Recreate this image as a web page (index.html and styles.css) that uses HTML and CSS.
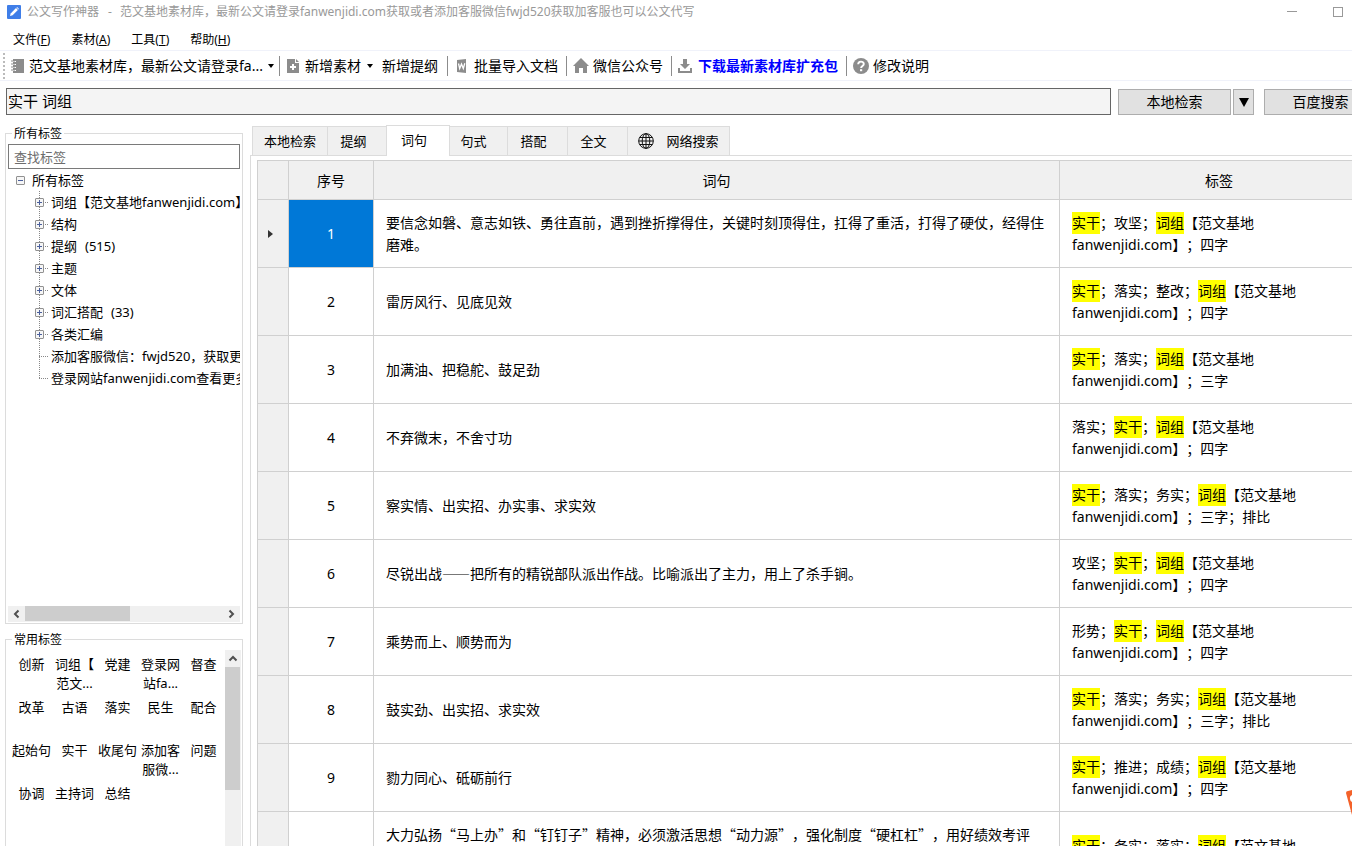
FILE: index.html
```html
<!DOCTYPE html>
<html lang="zh-CN">
<head>
<meta charset="utf-8">
<title>公文写作神器</title>
<link rel="stylesheet" href="styles.css">
</head>
<body>
<div class="app">
  <header class="titlebar">
    <svg class="logo" width="14" height="14" viewBox="0 0 14 14"><rect width="14" height="14" rx="1" fill="#3f7ee8"/><path d="M3 11l.7-2.6L9 3.1l1.9 1.9-5.3 5.3z" fill="#fff"/><path d="M9.5 2.6l.6-.6 1.9 1.9-.6.6z" fill="#fff"/></svg>
    <h1 class="title">公文写作神器<span class="dash">-</span>范文基地素材库，最新公文请登录fanwenjidi.com获取或者添加客服微信fwjd520获取加客服也可以公文代写</h1>
    <div class="controls">
      <button class="control" aria-label="最小化"><svg width="10" height="10"><path d="M0 4.500h10" stroke="#999"/></svg></button>
      <button class="control" aria-label="最大化"><svg width="10" height="10"><rect x=".5" y=".5" width="9" height="9" fill="none" stroke="#999"/></svg></button>
    </div>
  </header>

  <nav class="menu">
    <button>文件(<u>F</u>)</button>
    <button>素材(<u>A</u>)</button>
    <button>工具(<u>T</u>)</button>
    <button>帮助(<u>H</u>)</button>
  </nav>

  <div class="toolbar">
    <span class="grip"></span>
    <button class="tool tool-library"><svg width="14" height="16" viewBox="0 0 14 16"><path d="M3 1h11v14H3v-2h3v-1H3v-2h3V9H3V7h3V6H3V4h3V3H3z" fill="#8c8c8c"/><path d="M1 3h4M1 6h4M1 9h4M1 12h4" stroke="#8c8c8c"/></svg>范文基地素材库，最新公文请登录fa...<i class="caret"></i></button>
    <span class="sep"></span>
    <button class="tool tool-new"><svg width="12" height="16" viewBox="0 0 12 16"><path d="M0 1h8v4h4v10H0z" fill="#8c8c8c"/><path d="M9 1l3 3H9z" fill="#8c8c8c"/><path d="M6 6v6M3 9h6" stroke="#fff" stroke-width="2"/></svg>新增素材<i class="caret"></i></button>
    <button class="tool tool-plain">新增提纲</button>
    <span class="sep"></span>
    <button class="tool"><svg width="12" height="16" viewBox="0 0 12 16"><path d="M1 2l9-1v14l-9-1z" fill="#8c8c8c"/><path d="M2.500 5.500l1.200 5L5.500 6l1.800 4.500L8.800 5.300" fill="none" stroke="#fff" stroke-width="1.300"/></svg>批量导入文档</button>
    <span class="sep"></span>
    <button class="tool tool-tight"><svg width="16" height="16" viewBox="0 0 16 16"><path d="M8 0l8 8h-2v7h-4v-5H6v5H2V8H0z" fill="#8c8c8c"/></svg>微信公众号</button>
    <span class="sep"></span>
    <button class="tool tool-link"><svg width="14" height="16" viewBox="0 0 14 16"><path d="M5 1h4v5h3l-5 5-5-5h3zM0 10h2v3h10v-3h2v5H0z" fill="#8c8c8c"/></svg>下载最新素材库扩充包</button>
    <span class="sep"></span>
    <button class="tool tool-tight"><svg width="16" height="16" viewBox="0 0 16 16"><circle cx="8" cy="8" r="8" fill="#8c8c8c"/><path d="M5.200 6.200C5.200 2.800 10.800 2.800 10.800 6c0 1.900-2.700 2-2.700 4" fill="none" stroke="#fff" stroke-width="1.900"/><rect x="7" y="11.200" width="2.200" height="2" fill="#fff"/></svg>修改说明</button>
  </div>

  <form class="search">
    <input class="query" type="text" value="实干 词组" aria-label="检索词">
    <button class="btn btn-local" type="button">本地检索</button>
    <button class="btn btn-drop" type="button" aria-label="更多检索"><svg width="10" height="10"><path d="M0 1h10L5 10z"/></svg></button>
    <button class="btn btn-baidu" type="button">百度搜索</button>
  </form>

  <div class="body">
    <aside class="side">
      <fieldset class="group group-tree">
        <legend>所有标签</legend>
        <input class="find" type="text" placeholder="查找标签" aria-label="查找标签">
        <div class="tree">
          <div class="root"><button class="knob minus" aria-label="折叠"></button>所有标签</div>
          <ul>
            <li><button class="knob" aria-label="展开"></button>词组【范文基地fanwenjidi.com】</li>
            <li><button class="knob" aria-label="展开"></button>结构</li>
            <li><button class="knob" aria-label="展开"></button>提纲<span class="count">(515)</span></li>
            <li><button class="knob" aria-label="展开"></button>主题</li>
            <li><button class="knob" aria-label="展开"></button>文体</li>
            <li><button class="knob" aria-label="展开"></button>词汇搭配<span class="count">(33)</span></li>
            <li><button class="knob" aria-label="展开"></button>各类汇编</li>
            <li class="leaf">添加客服微信：fwjd520，获取更多</li>
            <li class="leaf">登录网站fanwenjidi.com查看更多</li>
          </ul>
        </div>
        <div class="hbar" aria-hidden="true">
          <svg width="17" height="16"><path d="M10.500 4.500L7 8l3.500 3.500" fill="none" stroke="#505050" stroke-width="2"/></svg>
          <div class="track"><div class="thumb"></div></div>
          <svg width="17" height="16"><path d="M6.500 4.500L10 8l-3.500 3.500" fill="none" stroke="#505050" stroke-width="2"/></svg>
        </div>
      </fieldset>
      <fieldset class="group group-common">
        <legend>常用标签</legend>
        <div class="common">
          <div class="chips">
            <button>创新</button><button>词组【<br>范文...</button><button>党建</button><button>登录网<br>站fa...</button><button>督查</button>
            <button>改革</button><button>古语</button><button>落实</button><button>民生</button><button>配合</button>
            <button>起始句</button><button>实干</button><button>收尾句</button><button>添加客<br>服微...</button><button>问题</button>
            <button>协调</button><button>主持词</button><button>总结</button>
          </div>
          <div class="vbar" aria-hidden="true">
            <svg width="16" height="17"><path d="M4.500 10.500L8 7l3.500 3.500" fill="none" stroke="#505050" stroke-width="2"/></svg>
            <div class="thumb"></div>
          </div>
        </div>
      </fieldset>
    </aside>

    <main class="main">
      <div class="tabs" role="tablist">
        <button role="tab" class="tab first">本地检索</button>
        <button role="tab" class="tab">提纲</button>
        <button role="tab" class="tab active" aria-selected="true">词句</button>
        <button role="tab" class="tab">句式</button>
        <button role="tab" class="tab">搭配</button>
        <button role="tab" class="tab">全文</button>
        <button role="tab" class="tab web"><svg width="16" height="16" viewBox="0 0 16 16" fill="none" stroke="#111"><circle cx="8" cy="8" r="7.300"/><ellipse cx="8" cy="8" rx="3.800" ry="7.300"/><path d="M8 .7v14.600M.7 8h14.600M1.700 4.500h12.600M1.700 11.500h12.600"/></svg>网络搜索</button>
      </div>
      <div class="panel">
        <table class="grid">
          <colgroup><col class="c-mark"><col class="c-num"><col><col class="c-tags"></colgroup>
          <thead><tr><th></th><th>序号</th><th>词句</th><th>标签</th></tr></thead>
          <tbody>
            <tr><td class="mark"><svg width="5" height="8"><path d="M0 0l5 4-5 4z" fill="#333"/></svg></td><td class="num selected">1</td><td class="text">要信念如磐、意志如铁、勇往直前，遇到挫折撑得住，关键时刻顶得住，扛得了重活，打得了硬仗，经得住磨难。</td><td><mark>实干</mark>；攻坚；<mark>词组</mark>【范文基地fanwenjidi.com】；四字</td></tr>
            <tr><td class="mark"></td><td class="num">2</td><td class="text">雷厉风行、见底见效</td><td><mark>实干</mark>；落实；整改；<mark>词组</mark>【范文基地fanwenjidi.com】；四字</td></tr>
            <tr><td class="mark"></td><td class="num">3</td><td class="text">加满油、把稳舵、鼓足劲</td><td><mark>实干</mark>；落实；<mark>词组</mark>【范文基地fanwenjidi.com】；三字</td></tr>
            <tr><td class="mark"></td><td class="num">4</td><td class="text">不弃微末，不舍寸功</td><td>落实；<mark>实干</mark>；<mark>词组</mark>【范文基地fanwenjidi.com】；四字</td></tr>
            <tr><td class="mark"></td><td class="num">5</td><td class="text">察实情、出实招、办实事、求实效</td><td><mark>实干</mark>；落实；务实；<mark>词组</mark>【范文基地fanwenjidi.com】；三字；排比</td></tr>
            <tr><td class="mark"></td><td class="num">6</td><td class="text">尽锐出战——把所有的精锐部队派出作战。比喻派出了主力，用上了杀手锏。</td><td>攻坚；<mark>实干</mark>；<mark>词组</mark>【范文基地fanwenjidi.com】；四字</td></tr>
            <tr><td class="mark"></td><td class="num">7</td><td class="text">乘势而上、顺势而为</td><td>形势；<mark>实干</mark>；<mark>词组</mark>【范文基地fanwenjidi.com】；四字</td></tr>
            <tr><td class="mark"></td><td class="num">8</td><td class="text">鼓实劲、出实招、求实效</td><td><mark>实干</mark>；落实；务实；<mark>词组</mark>【范文基地fanwenjidi.com】；三字；排比</td></tr>
            <tr><td class="mark"></td><td class="num">9</td><td class="text">勠力同心、砥砺前行</td><td><mark>实干</mark>；推进；成绩；<mark>词组</mark>【范文基地fanwenjidi.com】；四字</td></tr>
            <tr class="tall"><td class="mark"></td><td class="num"></td><td class="text">大力弘扬“马上办”和“钉钉子”精神，必须激活思想“动力源”，强化制度“硬杠杠”，用好绩效考评</td><td><mark>实干</mark>；务实；落实；<mark>词组</mark>【范文基地fanwenjidi.com】</td></tr>
          </tbody>
        </table>
      </div>
    </main>
  </div>
</div>
<svg class="float" width="6" height="26" viewBox="0 0 6 26"><path d="M0 3Q0 1 2 1L6 0v25z" fill="#f4622a"/><path d="M6 5Q3.500 6 4 9t2 3z" fill="#fff"/></svg>
</body>
</html>
```

FILE: styles.css
```css
* { box-sizing: border-box; }

body {
  margin: 0;
  overflow: hidden;
  background: #fff;
  color: #000;
  font: 13px/22px "Noto Sans", "Noto Sans CJK SC", sans-serif;
  text-spacing-trim: space-all;
}

button, input { font: inherit; color: inherit; }
button { margin: 0; padding: 0; border: 0; background: none; white-space: nowrap; }
svg { display: block; flex: none; }

/* The window runs past the right edge of the viewport. */
.app { display: flex; flex-direction: column; width: calc(100% + 55px); height: 100vh; overflow: hidden; }

.titlebar { display: flex; align-items: center; flex: none; height: 24px; padding: 0 46px 0 7px; }
.title { flex: 1; margin: 0 0 0 6px; font-size: 12px; font-weight: 400; color: #999; white-space: nowrap; }
.dash { margin: 0 8px 0 9px; }
.controls { display: flex; }
.control { display: flex; justify-content: center; align-items: center; width: 46px; height: 22px; }

.menu { display: flex; align-items: center; gap: 21px; flex: none; height: 27px; padding: 6px 13px 0; border-bottom: 1px solid #f0f2fa; font-size: 12px; }

.toolbar { display: flex; align-items: center; flex: none; height: 30px; padding-left: 3px; border-bottom: 1px solid #f0f2fa; font-size: 14px; }
.grip { width: 2px; height: 26px; margin-right: 5px; background: repeating-linear-gradient(#bbb 0 2px, transparent 2px 4px); }
.tool { display: flex; align-items: center; gap: 6px; padding: 0 8px; }
.tool-library { gap: 5px; padding: 0 5px 0 0; }
.tool-new { padding-left: 7px; }
.tool-plain { padding: 0 9px 0 1px; }
.tool-tight { gap: 4px; padding: 0 8px 0 6px; }
.tool-link { padding-left: 6px; color: #00f; font-weight: 700; }
.caret { border: 3px solid transparent; border-top: 4px solid #000; border-bottom: 0; }
.sep { width: 1px; height: 20px; background: #8c8c8c; }

.search { display: flex; align-items: flex-end; flex: none; height: 35px; margin: 0; padding: 0 30px 1px 6px; }
.query { flex: 1; min-width: 0; height: 27px; margin-right: 7px; padding: 0 1px 3px; border: 1px solid #666; background: #f4f4f4; font-size: 15px; outline: 0; }
.btn { display: flex; justify-content: center; align-items: center; height: 26px; border: 1px solid #adadad; background: #e1e1e1; font-size: 14px; }
.btn-local, .btn-baidu { width: 113px; }
.btn-drop { width: 21px; margin: 0 10px 0 2px; }

.body { display: flex; flex: 1; min-height: 0; padding-top: 8px; }

.side { display: flex; flex-direction: column; gap: 6px; flex: none; width: 250px; padding-left: 5px; }
.group { display: flex; flex-direction: column; width: 238px; min-width: 0; margin: 0; padding: 0 2px; border: 1px solid #dcdcdc; }
.group legend { margin-left: 4px; padding: 1px 2px 0; font-size: 12px; line-height: 18px; }
.group-tree { flex: 1; min-height: 0; padding-bottom: 1px; }
.group-common { flex: none; height: 216px; border-bottom: 0; }
.find { flex: none; width: 100%; height: 25px; margin-top: 1px; padding: 0 5px; border: 1px solid #7a7a7a; background: #fff; outline: 0; }
.find::placeholder { color: #6d6d6d; opacity: 1; }

.tree { flex: 1; min-height: 0; overflow: hidden; white-space: nowrap; }
.tree ul { margin: 0; padding: 0 0 0 27px; list-style: none; }
.tree li, .root { display: flex; align-items: center; height: 22px; }
.root { gap: 7px; padding-left: 8px; }
.tree li {
  gap: 7px;
  background:
    repeating-linear-gradient(#888 0 1px, transparent 1px 2px) 4px 0 / 1px 100% no-repeat,
    repeating-linear-gradient(to right, #888 0 1px, transparent 1px 2px) 4px 11px / 9px 1px no-repeat;
}
.tree li:last-child {
  background:
    repeating-linear-gradient(#888 0 1px, transparent 1px 2px) 4px 0 / 1px 12px no-repeat,
    repeating-linear-gradient(to right, #888 0 1px, transparent 1px 2px) 4px 11px / 9px 1px no-repeat;
}
.tree .leaf { padding-left: 16px; }
.knob {
  flex: none;
  width: 9px;
  height: 9px;
  border: 1px solid #919191;
  border-radius: 1px;
  background:
    linear-gradient(#4a5f9c, #4a5f9c) center / 5px 1px no-repeat,
    linear-gradient(#4a5f9c, #4a5f9c) center / 1px 5px no-repeat,
    #f6f6f6;
}
.minus { background: linear-gradient(#4a5f9c, #4a5f9c) center / 5px 1px no-repeat, #f6f6f6; }
.count { margin-left: 1px; }

.hbar { display: flex; flex: none; height: 16px; background: #f0f0f0; }
.track { flex: 1; }
.thumb { background: #cdcdcd; }
.hbar .thumb { width: 53%; height: 15px; }

.common { display: flex; justify-content: space-between; height: 200px; margin-top: 1px; }
.chips { display: grid; grid-template-columns: repeat(5, 43px); grid-auto-rows: 43px; margin-left: 2px; padding-top: 5px; }
.chips button { align-self: start; line-height: 19px; text-align: center; }
.vbar { width: 16px; background: #f0f0f0; }
.vbar .thumb { width: 15px; height: 123px; }

.main { display: flex; flex-direction: column; flex: 1; min-width: 0; padding-top: 1px; }
.tabs { display: flex; align-items: flex-end; flex: none; padding-left: 2px; }
.tab { display: flex; justify-content: center; align-items: center; width: 60px; height: 29px; padding-right: 8px; border: 1px solid #dcdcdc; border-width: 1px 1px 0 0; background: #f0f0f0; }
.tab.first { width: 76px; padding: 0; border-left-width: 1px; }
.tab.active { z-index: 1; width: 64px; height: 31px; margin: 0 -2px -1px; padding: 0 8px 2px 0; border-left-width: 1px; background: #fff; }
.tab.web { gap: 12px; width: 102px; padding: 0; }
.panel { flex: 1; min-height: 0; padding: 4px 28px 0 6px; border: 1px solid #dcdcdc; border-width: 1px 0 0 1px; overflow: hidden; }

.grid { width: 100%; table-layout: fixed; border-collapse: separate; border-spacing: 0; border: 1px solid #d0d0d0; border-width: 1px 0 0 1px; font-size: 14px; }
.c-mark { width: 31px; }
.c-num { width: 85px; }
.c-tags { width: 319px; }
.grid th { height: 39px; padding: 2px 0 0; border: 1px solid #d0d0d0; border-width: 0 1px 1px 0; background: #f0f0f0; font-weight: 400; }
.grid td { height: 68px; padding: 12px 12px 11px; border: 1px solid #d0d0d0; border-width: 0 1px 1px 0; }
.grid .tall td { height: 90px; }
.grid .tall .text { vertical-align: top; }
.grid .mark { padding: 0 10px; background: #f0f0f0; }
.grid .num { text-align: center; }
.grid .selected { background: #0078d7; background-clip: padding-box; color: #fff; }
.grid .text { padding: 11px 12px 12px; font-family: "Noto Sans CJK SC", sans-serif; }
.grid mark { display: inline-block; vertical-align: top; background: #ff0; color: inherit; }

.float { position: absolute; right: 0; top: 790px; }
```
